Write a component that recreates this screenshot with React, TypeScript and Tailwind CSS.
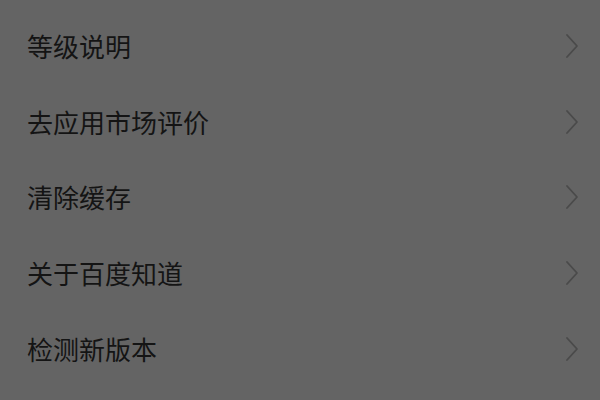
const items = ['等级说明', '去应用市场评价', '清除缓存', '关于百度知道', '检测新版本'];

function Chevron() {
  return (
    <svg width="14" height="26" viewBox="0 0 14 26" fill="none" className="shrink-0">
      <path d="M2 2 L12 13 L2 24" stroke="#4a4a4a" strokeWidth="1.8" strokeLinecap="round" strokeLinejoin="round" />
    </svg>
  );
}

export default function App() {
  return (
    <div
      className="w-[600px] h-[400px] overflow-hidden bg-[#646464] pt-[8px]"
      style={{ fontFamily: '"Noto Sans CJK SC", "Noto Sans", sans-serif' }}
    >
      {items.map((label) => (
        <div key={label} className="flex h-[75.75px] items-center justify-between pl-[27px] pr-[21px]">
          <span className="text-[26px] leading-none text-[#141414]">{label}</span>
          <Chevron />
        </div>
      ))}
    </div>
  );
}
